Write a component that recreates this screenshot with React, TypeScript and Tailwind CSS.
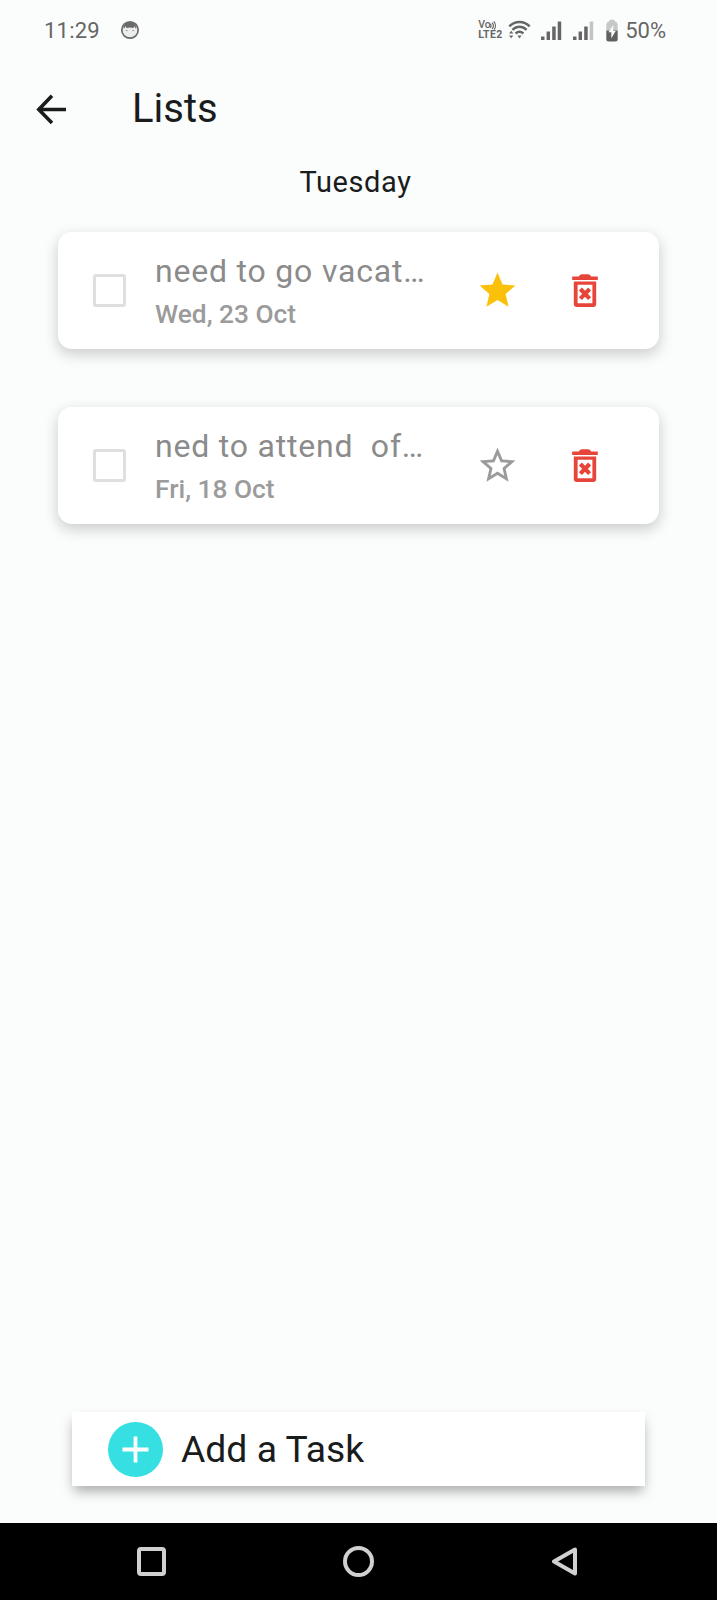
import React from "react";

type Task = { title: string; date: string; starred: boolean };

const tasks: Task[] = [
  { title: "need to go vacat…", date: "Wed, 23 Oct", starred: true },
  { title: "ned to attend  of…", date: "Fri, 18 Oct", starred: false },
];

function FaceIcon() {
  return (
    <svg className="ml-[20px] h-[20px] w-[20px]" viewBox="0 0 20 20">
      <circle cx="10" cy="10" r="8.2" fill="#ededed" stroke="#6b6b6b" strokeWidth="1.7" />
      <path d="M3.400 8C4 4 6.500 2 10 2s6 2 6.600 6l-1 .6-.9-2.400-1.400 1.900-3.300-.7-3.300.7-1.400-1.900-.9 2.400z" fill="#6b6b6b" />
      <path d="M5.800 10.600h1.800M12.400 10.600h1.800" stroke="#9a9a9a" strokeWidth="1" />
    </svg>
  );
}

function VoLteIcon() {
  return (
    <div className="flex h-[20px] w-[25px] flex-col text-[#666]">
      <div className="flex h-[10px] items-center">
        <span className="text-[10.500px] font-medium leading-[10px]">Vo</span>
        <svg className="-ml-px h-[9px] w-[7px]" viewBox="0 0 7 9">
          <path d="M.2 3c1 1 1 2.600.2 4M2 1.600c1.600 1.700 1.600 4.500.2 6.400M3.700.4c2.200 2.300 2.200 5.800.5 8.200" fill="none" stroke="#666" strokeWidth="1.200" />
        </svg>
      </div>
      <span className="text-[10.500px] font-bold leading-[9px] tracking-[0.4px]">LTE2</span>
    </div>
  );
}

function WifiIcon() {
  return (
    <svg className="h-[20px] w-[24px]" viewBox="0 0 24 20">
      <g fill="none" stroke="#666" strokeWidth="2.500">
        <path d="M2.300 6.400C8 .6 17 .6 22.700 6.400" />
        <path d="M5.400 9.800c4.200-4 10-4 14.200 0" />
        <path d="M8.600 13.500c2.400-2.200 5.400-2.200 7.800 0" />
      </g>
      <path d="M10.400 15.600h4.200l-2.100 3zM2 13.600h4.400L4.200 10.800zM2 15.400h4.400l-2.200 2.900z" fill="#666" />
    </svg>
  );
}

function SignalIcon({ weak = false }: { weak?: boolean }) {
  return (
    <svg className="h-[19px] w-[22px]" viewBox="0 0 22 19">
      <path d="M1 15.500h3.500V19H1zM6.600 10.500H10V19H6.600zM12.200 5.500h3.500V19h-3.500z" fill="#666" />
      <path d="M17.700.5h3.500V19h-3.500z" fill={weak ? "#c4c4c4" : "#666"} />
    </svg>
  );
}

function BatteryIcon() {
  return (
    <svg className="h-[23px] w-[12px]" viewBox="0 0 12 23">
      <path d="M3 2.500Q3 .5 6 .5t3 2Q11.700 3 11.700 6v5.500H.3V6Q.3 3 3 2.500z" fill="#c8c8c8" />
      <path d="M.3 11.500h11.400V20q0 2.500-2.500 2.500H2.800Q.3 22.500.3 20z" fill="#606060" />
      <path d="M7.200 6L2.500 13.200h2.800v6L9.700 12H7.200z" fill="#fbfdfc" />
    </svg>
  );
}

function StarIcon({ filled }: { filled: boolean }) {
  return (
    <svg className="h-[43px] w-[43px]" viewBox="0 0 24 24">
      {filled ? (
        <path d="M12 17.270L18.180 21l-1.640-7.030L22 9.240l-7.190-.61L12 2 9.190 8.630 2 9.240l5.460 4.730L5.820 21z" fill="#fbc10a" />
      ) : (
        <path d="M22 9.240l-7.190-.62L12 2 9.190 8.630 2 9.240l5.460 4.730L5.820 21 12 17.270 18.180 21l-1.630-7.030L22 9.240zM12 15.400l-3.760 2.270 1-4.280-3.320-2.880 4.380-.38L12 6.100l1.710 4.040 4.380.38-3.320 2.880 1 4.280L12 15.400z" fill="#9b9b9b" />
      )}
    </svg>
  );
}

function TrashIcon() {
  return (
    <svg className="h-[34px] w-[26px]" viewBox="0 0 26 34">
      <path d="M.2 2.400H6.800Q8 .2 10 .2h6q2 0 3.200 2.200h6.600V6H.2z" fill="#e8453a" />
      <path fillRule="evenodd" d="M1.800 7.400h22.400V29.800q0 3.200-3.200 3.200H5q-3.200 0-3.200-3.200zM5.600 10.800v18.400h14.800V10.800z" fill="#e8453a" />
      <path d="M8.400 15l9.200 9.600M17.600 15l-9.200 9.600" stroke="#e8453a" strokeWidth="4.200" />
    </svg>
  );
}

function TaskCard({ task }: { task: Task }) {
  return (
    <li className="flex h-[117px] items-center rounded-[14px] bg-white pl-[35px] pr-[61px] shadow-[0_5px_14px_1px_rgba(0,0,0,0.18)]">
      <span className="h-[33px] w-[33px] rounded-[3px] border-[3px] border-[#dfdfdf]" />
      <div className="ml-[29px] flex w-[290px] flex-col pt-[8px]">
        <span className="whitespace-pre text-[32px] leading-[39px] tracking-[0.8px] text-[#8b8b8b]">{task.title}</span>
        <span className="text-[26.300px] font-medium leading-[47px] text-[#9b9b9b]">{task.date}</span>
      </div>
      <div className="ml-auto flex items-center gap-[53px]">
        <StarIcon filled={task.starred} />
        <TrashIcon />
      </div>
    </li>
  );
}

export default function App() {
  return (
    <div className="flex h-[1600px] w-[717px] flex-col bg-[#fbfdfc] font-['Roboto',sans-serif] text-[#191c1c]">
      <div className="flex h-[60px] items-center pl-[44px] pr-[51px] text-[22px] text-[#666]">
        <span className="tracking-[0.2px]">11:29</span>
        <FaceIcon />
        <div className="ml-auto flex items-center">
          <VoLteIcon />
          <div className="ml-[4px] flex"><WifiIcon /></div>
          <div className="ml-[9px] flex"><SignalIcon /></div>
          <div className="ml-[10px] flex"><SignalIcon weak /></div>
          <div className="ml-[12px] mr-[7px] flex"><BatteryIcon /></div>
          <span>50%</span>
        </div>
      </div>

      <header className="flex h-[97px] items-center pl-[36px]">
        <svg className="h-[32px] w-[32px]" viewBox="0 0 32 32">
          <path d="M30 16.500H3.500M16 2.800L2.800 16.500 16 30" fill="none" stroke="#191c1c" strokeWidth="3.600" />
        </svg>
        <h1 className="ml-[64px] pt-px text-[40px]">Lists</h1>
      </header>

      <h2 className="flex h-[50px] items-center justify-center pr-[6px] pt-[2px] text-[29px] tracking-[0.6px]">Tuesday</h2>

      <ul className="mt-[25px] flex flex-col gap-[58px] px-[58px]">
        {tasks.map((task) => (
          <TaskCard key={task.date} task={task} />
        ))}
      </ul>

      <button className="mx-[72px] mb-[37px] mt-auto flex h-[74px] items-center bg-white pl-[36px] shadow-[0_7px_12px_-2px_rgba(0,0,0,0.34)]">
        <svg className="h-[55px] w-[55px]" viewBox="0 0 55 55">
          <circle cx="27.500" cy="27.500" r="27.500" fill="#36e0e2" />
          <path d="M27.500 14.500v26M14.500 27.500h26" stroke="#fff" strokeWidth="3.800" />
        </svg>
        <span className="ml-[18px] pt-[2px] text-[37.300px]">Add a Task</span>
      </button>

      <nav className="flex h-[77px] items-center bg-black pl-[137px] pr-[139px]">
        <span className="h-[29px] w-[29px] rounded-[4px] border-4 border-[#d0d0d0]" />
        <span className="ml-[177px] h-[31px] w-[31px] rounded-full border-4 border-[#d0d0d0]" />
        <svg className="ml-auto h-[29px] w-[27px]" viewBox="0 0 27 29">
          <path d="M24 2.500L3 14.500l21 12z" fill="none" stroke="#d0d0d0" strokeWidth="4" strokeLinejoin="round" />
        </svg>
      </nav>
    </div>
  );
}
